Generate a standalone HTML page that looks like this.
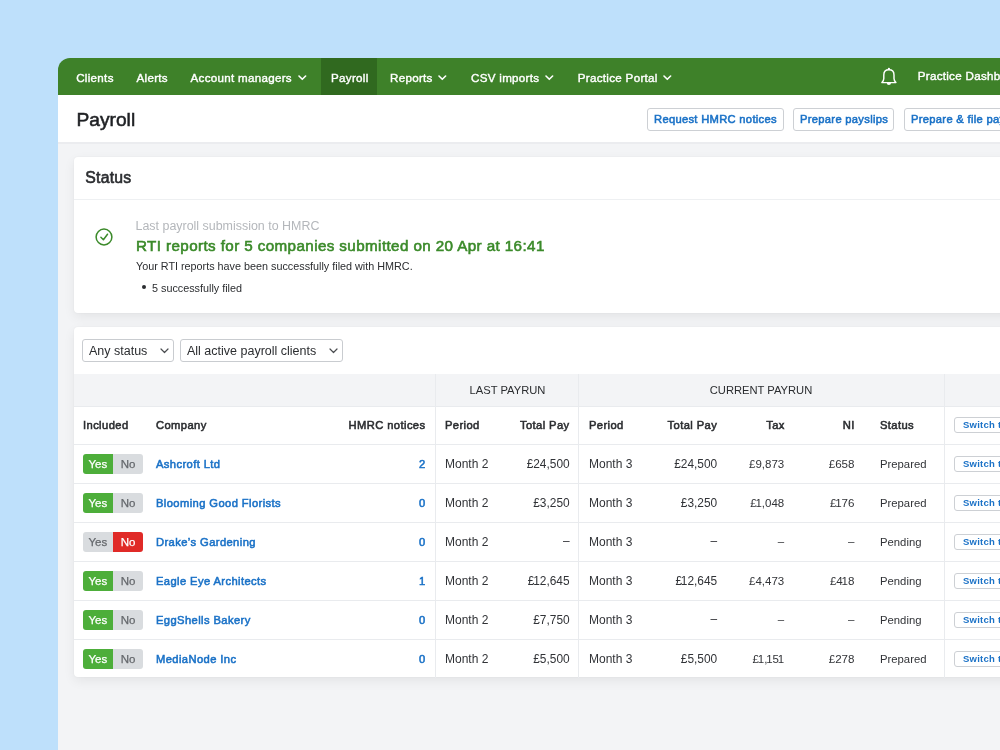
<!DOCTYPE html><html><head><meta charset="utf-8"><style>
*{box-sizing:border-box;margin:0;padding:0}
html,body{width:1000px;height:750px;overflow:hidden}
body{background:#bee0fb;position:relative;font-family:"Liberation Sans", sans-serif;color:#2b2d30}
.a{position:absolute;white-space:nowrap}
.nav{left:58px;top:58px;width:1000px;height:37px;background:#3e8129;border-top-left-radius:12px}
.nt{color:#fff;font-size:11.6px;letter-spacing:0.3px;top:70px;line-height:16px;-webkit-text-stroke:0.4px #fff}
.chev{position:absolute}
.hdr{left:58px;top:95px;width:1000px;height:49px;background:#fff;border-bottom:2px solid #ebecef}
.page{left:58px;top:144px;width:1000px;height:700px;background:#f3f4f6}
.btn{height:23px;border:1px solid #cdd0d4;border-radius:3px;background:#fff;color:#1b72c7;-webkit-text-stroke:0.55px #1b72c7;font-size:11.2px;letter-spacing:0.3px;line-height:21px;padding:0 6px}
.card{background:#fff;border-radius:4px;box-shadow:0 4px 12px rgba(0,0,0,0.065),0 0 2px rgba(0,0,0,0.05)}
.th{-webkit-text-stroke:0.55px #2b2d30;font-size:11.2px;letter-spacing:0.4px;color:#2b2d30;line-height:14px}
.td{font-size:11.6px;color:#313337;line-height:14px}
.lk{-webkit-text-stroke:0.55px #1b72c7;font-size:11.2px;letter-spacing:0.4px;color:#1b72c7;line-height:14px}
.f12{font-size:12px} .f119{font-size:11.9px} .f115{font-size:11.5px} .f116{font-size:11.6px} .f113{font-size:11.3px}
.hl{background:#e4e6e9}
.tg{height:20px;width:60.5px;border-radius:3px;overflow:hidden;font-size:11.5px;line-height:20px}
.tg span{position:absolute;top:0;height:20px;text-align:center;-webkit-text-stroke:0.25px currentColor}
.sw{height:16px;border:1px solid #cdd0d4;border-radius:3px;background:#fff;color:#1b72c7;font-weight:700;font-size:9.5px;letter-spacing:0.25px;line-height:14px;padding:0 0 0 8px;width:60px;overflow:hidden}
</style></head><body><div style="position:absolute;left:0;top:0;width:1000px;height:750px;will-change:transform"><div class="a nav"></div>
<div class="a" style="left:321px;top:58px;width:56px;height:37px;background:#30691f"></div>
<div class="a nt" style="left:76.2px">Clients</div>
<div class="a nt" style="left:136.5px">Alerts</div>
<div class="a nt" style="left:190.5px">Account managers</div>
<div class="a nt" style="left:331px">Payroll</div>
<div class="a nt" style="left:390px">Reports</div>
<div class="a nt" style="left:471px">CSV imports</div>
<div class="a nt" style="left:577.8px">Practice Portal</div>
<svg class="chev" style="left:297.5px;top:74.8px" width="9" height="6" viewBox="0 0 9 6"><path d="M1 1 L4.3 4.3 L7.6 1" fill="none" stroke="#fff" stroke-width="1.6" stroke-linecap="round" stroke-linejoin="round"/></svg>
<svg class="chev" style="left:438px;top:74.8px" width="9" height="6" viewBox="0 0 9 6"><path d="M1 1 L4.3 4.3 L7.6 1" fill="none" stroke="#fff" stroke-width="1.6" stroke-linecap="round" stroke-linejoin="round"/></svg>
<svg class="chev" style="left:544.7px;top:74.8px" width="9" height="6" viewBox="0 0 9 6"><path d="M1 1 L4.3 4.3 L7.6 1" fill="none" stroke="#fff" stroke-width="1.6" stroke-linecap="round" stroke-linejoin="round"/></svg>
<svg class="chev" style="left:663px;top:74.8px" width="9" height="6" viewBox="0 0 9 6"><path d="M1 1 L4.3 4.3 L7.6 1" fill="none" stroke="#fff" stroke-width="1.6" stroke-linecap="round" stroke-linejoin="round"/></svg>
<svg class="a" style="left:875px;top:62px" width="30" height="30" viewBox="0 0 30 30"><path d="M6.9 20.6 L20.9 20.6 C19.6 19.3 19 18 19 16.5 L19 13 C19 9.8 16.9 7.8 13.9 7.8 C10.9 7.8 8.8 9.8 8.8 13 L8.8 16.5 C8.8 18 8.2 19.3 6.9 20.6 Z" fill="none" stroke="#fff" stroke-width="1.45" stroke-linejoin="round"/><circle cx="13.9" cy="6.9" r="1.1" fill="#fff"/><path d="M11.8 21 A2.1 2.1 0 0 0 16 21 Z" fill="#fff"/></svg>
<div class="a nt" style="left:917.7px;top:68px">Practice Dashboard</div>
<div class="a hdr"></div>
<div class="a" style="left:76.5px;top:108.5px;font-size:19.2px;line-height:22px;color:#1f2124;-webkit-text-stroke:0.55px #1f2124">Payroll</div>
<div class="a page"></div>
<div class="a btn" style="left:647px;top:107.5px;width:137px">Request HMRC notices</div>
<div class="a btn" style="left:793px;top:107.5px;width:101px">Prepare payslips</div>
<div class="a btn" style="left:904px;top:107.5px;width:160px">Prepare &amp; file payroll</div>
<div class="a card" style="left:74px;top:157px;width:1000px;height:156px"></div>
<div class="a" style="left:74px;top:198.5px;width:1000px;height:1.5px;background:#eef0f2"></div>
<div class="a" style="left:85.3px;top:169px;font-size:15.8px;letter-spacing:0.22px;-webkit-text-stroke:0.6px #2b2d30;line-height:18px;color:#2b2d30">Status</div>
<svg class="a" style="left:95px;top:228px" width="18" height="18" viewBox="0 0 18 18"><circle cx="9" cy="9" r="7.9" fill="none" stroke="#3b8a2a" stroke-width="1.5"/><path d="M5.9 9.3 L8.4 11.7 L12.5 6.2" fill="none" stroke="#3b8a2a" stroke-width="1.5" stroke-linecap="round" stroke-linejoin="round"/></svg>
<div class="a" style="left:135.5px;top:219px;font-size:12.45px;line-height:14px;color:#b4b7bb">Last payroll submission to HMRC</div>
<div class="a" style="left:136px;top:237px;font-size:15.2px;letter-spacing:0.4px;-webkit-text-stroke:0.6px #3b8a2a;line-height:17px;color:#3b8a2a">RTI reports for 5 companies submitted on 20 Apr at 16:41</div>
<div class="a" style="left:136px;top:260px;font-size:10.8px;line-height:13px;color:#2b2d30">Your RTI reports have been successfully filed with HMRC.</div>
<div class="a" style="left:141.6px;top:285.4px;width:4px;height:4px;border-radius:50%;background:#2b2d30"></div>
<div class="a" style="left:152px;top:281.7px;font-size:10.8px;line-height:13px;color:#2b2d30">5 successfully filed</div>
<div class="a card" style="left:74px;top:327px;width:1000px;height:350px;overflow:hidden"></div>
<div class="a" style="left:82px;top:339px;width:92px;height:23px;border:1px solid #c9ccd0;border-radius:3px;background:#fff"></div>
<div class="a td" style="left:89px;top:344px;font-size:12.5px;line-height:14px;color:#2b2d30">Any status</div>
<svg class="chev" style="left:159.7px;top:347.5px" width="9" height="6" viewBox="0 0 9 6"><path d="M1 1 L4.5 4.5 L8 1" fill="none" stroke="#4a4c50" stroke-width="1.2" stroke-linecap="round" stroke-linejoin="round"/></svg>
<div class="a" style="left:180px;top:339px;width:163px;height:23px;border:1px solid #c9ccd0;border-radius:3px;background:#fff"></div>
<div class="a td" style="left:187px;top:344px;font-size:12.5px;line-height:14px;color:#2b2d30">All active payroll clients</div>
<svg class="chev" style="left:328.7px;top:347.5px" width="9" height="6" viewBox="0 0 9 6"><path d="M1 1 L4.5 4.5 L8 1" fill="none" stroke="#4a4c50" stroke-width="1.2" stroke-linecap="round" stroke-linejoin="round"/></svg>
<div class="a" style="left:74px;top:374px;width:1000px;height:32px;background:#f3f4f6"></div>
<div class="a" style="left:74px;top:406px;width:1000px;height:1px;background:#e9ebee"></div>
<div class="a" style="left:74px;top:444px;width:1000px;height:1px;background:#e9ebee"></div>
<div class="a" style="left:74px;top:483px;width:1000px;height:1px;background:#e9ebee"></div>
<div class="a" style="left:74px;top:522px;width:1000px;height:1px;background:#e9ebee"></div>
<div class="a" style="left:74px;top:561px;width:1000px;height:1px;background:#e9ebee"></div>
<div class="a" style="left:74px;top:600px;width:1000px;height:1px;background:#e9ebee"></div>
<div class="a" style="left:74px;top:639px;width:1000px;height:1px;background:#e9ebee"></div>
<div class="a" style="left:435px;top:374px;width:1px;height:304px;background:#e9ebee"></div>
<div class="a" style="left:578px;top:374px;width:1px;height:304px;background:#e9ebee"></div>
<div class="a" style="left:944px;top:374px;width:1px;height:304px;background:#e9ebee"></div>
<div class="a" style="left:436px;top:383px;width:143px;text-align:center;font-size:11.2px;line-height:14px;color:#2b2d30">LAST PAYRUN</div>
<div class="a" style="left:578px;top:383px;width:366px;text-align:center;font-size:11.2px;line-height:14px;color:#2b2d30">CURRENT PAYRUN</div>
<div class="a th" style="left:83px;top:418px">Included</div>
<div class="a th" style="left:156px;top:418px">Company</div>
<div class="a th" style="right:574.5px;top:418px;text-align:right;">HMRC notices</div>
<div class="a th" style="left:445px;top:418px">Period</div>
<div class="a th" style="right:430.4px;top:418px;text-align:right;">Total Pay</div>
<div class="a th" style="left:589px;top:418px">Period</div>
<div class="a th" style="right:282.79999999999995px;top:418px;text-align:right;">Total Pay</div>
<div class="a th" style="right:215.20000000000005px;top:418px;text-align:right;">Tax</div>
<div class="a th" style="right:145.20000000000005px;top:418px;text-align:right;">NI</div>
<div class="a th" style="left:880px;top:418px">Status</div>
<div class="a sw" style="left:954px;top:417px">Switch to</div>
<div class="a tg" style="left:82.6px;top:454px"><span style="left:0;width:30.5px;background:#4dae3a;color:#fff">Yes</span><span style="left:30.5px;width:30px;background:#d9dcdf;color:#65686c">No</span></div>
<div class="a lk" style="left:156px;top:457px">Ashcroft Ltd</div>
<div class="a lk" style="right:574.5px;top:457px;text-align:right;">2</div>
<div class="a td f12" style="left:445px;top:457px">Month 2</div>
<div class="a td f119" style="right:430.4px;top:457px;text-align:right;">£24,500</div>
<div class="a td f12" style="left:589px;top:457px">Month 3</div>
<div class="a td f119" style="right:282.79999999999995px;top:457px;text-align:right;">£24,500</div>
<div class="a td f115" style="right:215.79999999999995px;top:457px;text-align:right;">£9,873</div>
<div class="a td f116" style="right:145.5px;top:457px;text-align:right;">£658</div>
<div class="a td f113" style="left:880px;top:457px">Prepared</div>
<div class="a sw" style="left:954px;top:456px">Switch to</div>
<div class="a tg" style="left:82.6px;top:493px"><span style="left:0;width:30.5px;background:#4dae3a;color:#fff">Yes</span><span style="left:30.5px;width:30px;background:#d9dcdf;color:#65686c">No</span></div>
<div class="a lk" style="left:156px;top:496px">Blooming Good Florists</div>
<div class="a lk" style="right:574.5px;top:496px;text-align:right;">0</div>
<div class="a td f12" style="left:445px;top:496px">Month 2</div>
<div class="a td f119" style="right:430.4px;top:496px;text-align:right;">£3,250</div>
<div class="a td f12" style="left:589px;top:496px">Month 3</div>
<div class="a td f119" style="right:282.79999999999995px;top:496px;text-align:right;">£3,250</div>
<div class="a td f115" style="right:215.79999999999995px;top:496px;text-align:right;">£<span style="margin-left:-1.2px">1</span>,048</div>
<div class="a td f116" style="right:145.5px;top:496px;text-align:right;">£<span style="margin-left:-1.2px">1</span>76</div>
<div class="a td f113" style="left:880px;top:496px">Prepared</div>
<div class="a sw" style="left:954px;top:495px">Switch to</div>
<div class="a tg" style="left:82.6px;top:532px"><span style="left:0;width:30.5px;background:#d9dcdf;color:#65686c">Yes</span><span style="left:30.5px;width:30px;background:#e02a27;color:#fff">No</span></div>
<div class="a lk" style="left:156px;top:535px">Drake’s Gardening</div>
<div class="a lk" style="right:574.5px;top:535px;text-align:right;">0</div>
<div class="a td f12" style="left:445px;top:535px">Month 2</div>
<div class="a td f119" style="right:430.4px;top:534px;text-align:right;">–</div>
<div class="a td f12" style="left:589px;top:535px">Month 3</div>
<div class="a td f119" style="right:282.79999999999995px;top:534px;text-align:right;">–</div>
<div class="a td f115" style="right:215.79999999999995px;top:534px;text-align:right;">–</div>
<div class="a td f116" style="right:145.5px;top:534px;text-align:right;">–</div>
<div class="a td f113" style="left:880px;top:535px">Pending</div>
<div class="a sw" style="left:954px;top:534px">Switch to</div>
<div class="a tg" style="left:82.6px;top:571px"><span style="left:0;width:30.5px;background:#4dae3a;color:#fff">Yes</span><span style="left:30.5px;width:30px;background:#d9dcdf;color:#65686c">No</span></div>
<div class="a lk" style="left:156px;top:574px">Eagle Eye Architects</div>
<div class="a lk" style="right:574.5px;top:574px;text-align:right;">1</div>
<div class="a td f12" style="left:445px;top:574px">Month 2</div>
<div class="a td f119" style="right:430.4px;top:574px;text-align:right;">£<span style="margin-left:-1.2px">1</span>2,645</div>
<div class="a td f12" style="left:589px;top:574px">Month 3</div>
<div class="a td f119" style="right:282.79999999999995px;top:574px;text-align:right;">£<span style="margin-left:-1.2px">1</span>2,645</div>
<div class="a td f115" style="right:215.79999999999995px;top:574px;text-align:right;">£4,473</div>
<div class="a td f116" style="right:145.5px;top:574px;text-align:right;">£4<span style="margin-left:-1.2px">1</span>8</div>
<div class="a td f113" style="left:880px;top:574px">Pending</div>
<div class="a sw" style="left:954px;top:573px">Switch to</div>
<div class="a tg" style="left:82.6px;top:610px"><span style="left:0;width:30.5px;background:#4dae3a;color:#fff">Yes</span><span style="left:30.5px;width:30px;background:#d9dcdf;color:#65686c">No</span></div>
<div class="a lk" style="left:156px;top:613px">EggShells Bakery</div>
<div class="a lk" style="right:574.5px;top:613px;text-align:right;">0</div>
<div class="a td f12" style="left:445px;top:613px">Month 2</div>
<div class="a td f119" style="right:430.4px;top:613px;text-align:right;">£7,750</div>
<div class="a td f12" style="left:589px;top:613px">Month 3</div>
<div class="a td f119" style="right:282.79999999999995px;top:612px;text-align:right;">–</div>
<div class="a td f115" style="right:215.79999999999995px;top:612px;text-align:right;">–</div>
<div class="a td f116" style="right:145.5px;top:612px;text-align:right;">–</div>
<div class="a td f113" style="left:880px;top:613px">Pending</div>
<div class="a sw" style="left:954px;top:612px">Switch to</div>
<div class="a tg" style="left:82.6px;top:649px"><span style="left:0;width:30.5px;background:#4dae3a;color:#fff">Yes</span><span style="left:30.5px;width:30px;background:#d9dcdf;color:#65686c">No</span></div>
<div class="a lk" style="left:156px;top:652px">MediaNode Inc</div>
<div class="a lk" style="right:574.5px;top:652px;text-align:right;">0</div>
<div class="a td f12" style="left:445px;top:652px">Month 2</div>
<div class="a td f119" style="right:430.4px;top:652px;text-align:right;">£5,500</div>
<div class="a td f12" style="left:589px;top:652px">Month 3</div>
<div class="a td f119" style="right:282.79999999999995px;top:652px;text-align:right;">£5,500</div>
<div class="a td f115" style="right:215.79999999999995px;top:652px;text-align:right;">£<span style="margin-left:-1.2px">1</span>,<span style="margin-left:-1.2px">1</span>5<span style="margin-left:-1.2px">1</span></div>
<div class="a td f116" style="right:145.5px;top:652px;text-align:right;">£278</div>
<div class="a td f113" style="left:880px;top:652px">Prepared</div>
<div class="a sw" style="left:954px;top:651px">Switch to</div></div></body></html>
